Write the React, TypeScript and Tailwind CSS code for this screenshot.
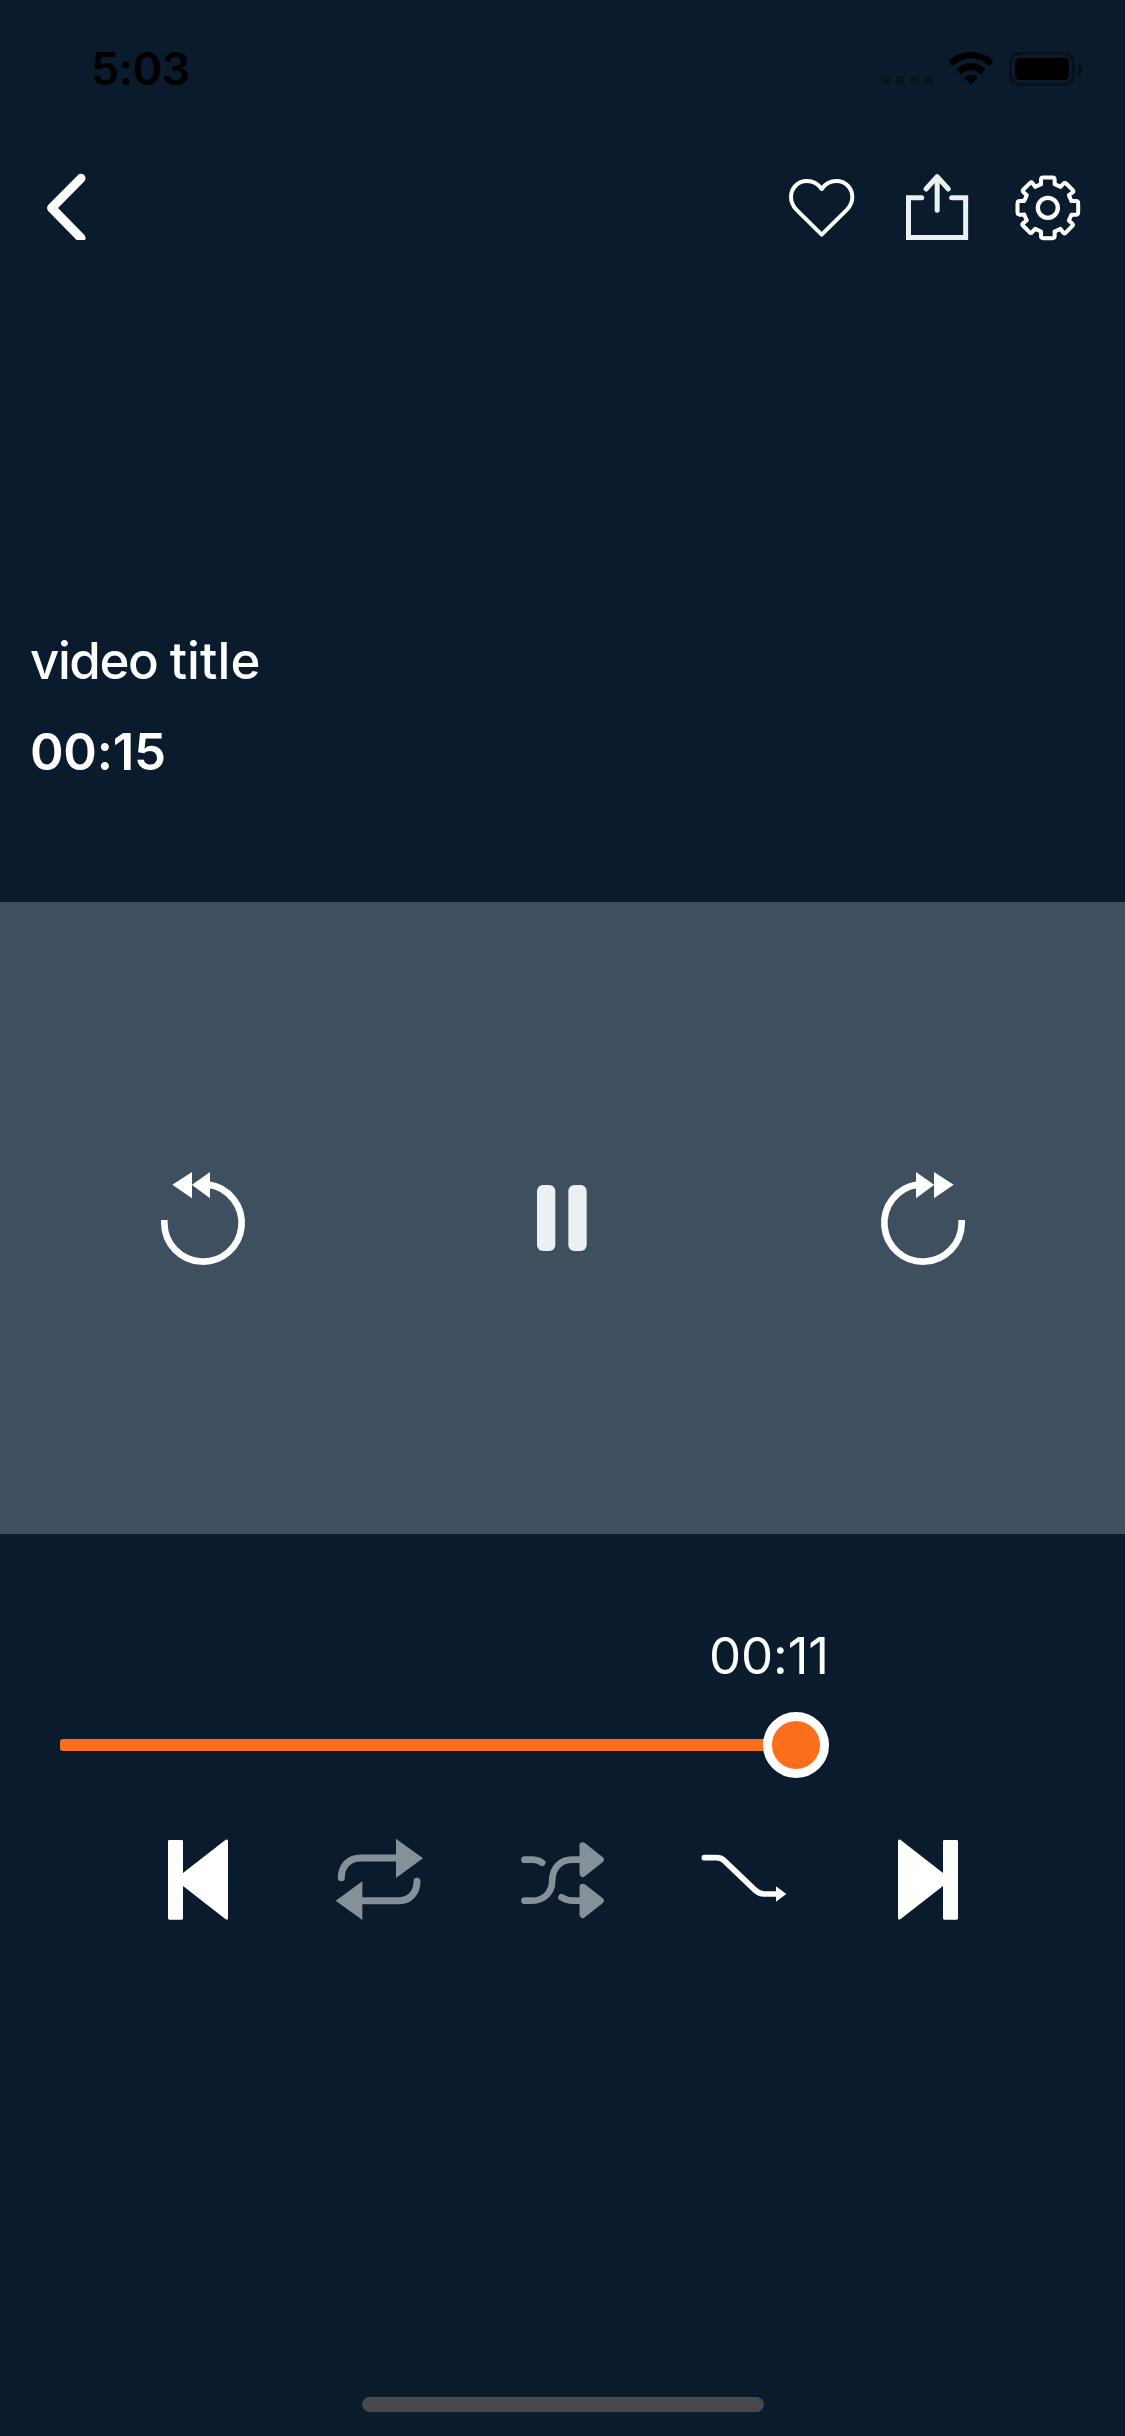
import type { ReactNode } from "react";

type IconProps = { label: string; viewBox: string; className: string; children: ReactNode };

function Icon({ label, viewBox, className, children }: IconProps) {
  return (
    <svg aria-label={label} viewBox={viewBox} className={className} fill="none" strokeLinejoin="round" strokeLinecap="round">
      {children}
    </svg>
  );
}

function StatusBar() {
  return (
    <header className="flex h-[150px] items-start justify-between pt-[39px] pr-[40px] pl-[91px] text-black">
      <span className="text-[45px] leading-[60px] font-semibold tracking-[-0.6px]">5:03</span>
      <Icon label="Status" viewBox="0 0 225 60" className="mt-[1px] h-[60px] w-[225px]">
        <g fill="#081521">
          <rect x="22" y="36" width="9" height="9" rx="3" />
          <rect x="36" y="36" width="9" height="9" rx="3" />
          <rect x="50" y="36" width="9" height="9" rx="3" />
          <rect x="64" y="36" width="9" height="9" rx="3" />
        </g>
        <g fill="#000">
          <path d="M111 12C120 12 128 15.500 133.700 21.200L129.300 26.200C124.500 21.500 118 18.600 111 18.600C104 18.600 97.500 21.500 92.700 26.200L88.300 21.200C94 15.500 102 12 111 12Z" />
          <path d="M111 23C116.800 23 121.800 25.300 125.700 29.400L120.800 34.400C118.300 31.700 114.800 30.200 111 30.200C107.200 30.200 103.700 31.700 101.200 34.400L96.300 29.400C100.200 25.300 105.200 23 111 23Z" />
          <path d="M111 34.500C113.700 34.500 116 35.700 117.600 37.800L111 45L104.400 37.800C106 35.700 108.300 34.500 111 34.500Z" />
          <rect x="155" y="18" width="54" height="22" rx="4.500" />
        </g>
        <rect x="150.500" y="13.500" width="63" height="31" rx="9" stroke="#06111b" strokeWidth="3" />
        <path d="M218 22.500C220.500 23.500 222 26 222 29C222 32 220.500 34.500 218 35.500Z" fill="#06111b" />
      </Icon>
    </header>
  );
}

const GEAR_QUARTER =
  "M-20.500-71V-84Q-20.500-91-14-91H14Q20.500-91 20.500-84V-71L38-63L47-73Q51-78 55-73L75-53Q79-49 74-46L63-38L71-20.500";

function NavBar() {
  return (
    <nav className="flex h-[110px] justify-between pl-[40px]">
      <Icon label="Back" viewBox="0 0 60 90" className="h-[90px] w-[60px]">
        <path d="M41 28.300L11.600 58L41 88" stroke="#fff" strokeWidth="9" />
      </Icon>
      <div className="flex">
        <Icon label="Favourite" viewBox="0 0 330 330" className="size-[110px]">
          <path
            d="M155 117C144 101 128 93 111 93C83 93 63 115 63 141C63 158 69 168 79 179L155 254L231 179C241 168 247 158 247 141C247 115 227 93 199 93C182 93 166 101 155 117Z"
            stroke="#fff"
            strokeWidth="12"
          />
        </Icon>
        <Icon label="Share" viewBox="330 0 330 330" className="size-[110px]">
          <g stroke="#ecf0f3" strokeWidth="15">
            <path d="M455 143H415.500V262.500H587V143H545" strokeLinejoin="miter" />
            <path d="M501.500 82V181M468 117L501.500 80L535 117" />
          </g>
        </Icon>
        <Icon label="Settings" viewBox="660 0 405 330" className="h-[110px] w-[135px]">
          <g transform="translate(833.500 173.500)" stroke="#fff" strokeWidth="12">
            <path d={GEAR_QUARTER} />
            <path d={GEAR_QUARTER} transform="rotate(90)" />
            <path d={GEAR_QUARTER} transform="rotate(180)" />
            <path d={GEAR_QUARTER} transform="rotate(270)" />
            <circle r="30" strokeWidth="13" />
          </g>
        </Icon>
      </div>
    </nav>
  );
}

function SkipGlyph() {
  return (
    <>
      <path d="M103 240V249A116 116 0 1 0 236 134" stroke="#fff" strokeWidth="20" strokeLinecap="butt" />
      <path d="M127 134L186 96V134L240 96V175L186 135V175Z" fill="#fff" />
    </>
  );
}

function VideoPanel() {
  return (
    <section className="flex h-[632px] justify-between bg-[#3e4f60] pt-[238px] pr-[135px] pl-[130px]">
      <Icon label="Rewind" viewBox="0 0 420 420" className="size-[140px]">
        <SkipGlyph />
      </Icon>
      <Icon label="Pause" viewBox="-30 -60 420 420" className="size-[140px]">
        <rect x="111" y="75" width="55" height="198" rx="18" fill="#ecf0f3" />
        <rect x="205" y="75" width="55" height="198" rx="18" fill="#ecf0f3" />
      </Icon>
      <Icon label="Fast forward" viewBox="0 0 420 420" className="size-[140px]">
        <g transform="translate(438 0) scale(-1 1)">
          <SkipGlyph />
        </g>
      </Icon>
    </section>
  );
}

function SeekBar() {
  return (
    <div className="w-[829px] pl-[60px]">
      <div className="flex justify-end text-[51px] leading-[60px] tracking-[-0.1px] text-white">00:11</div>
      <div className="mt-[26px] flex h-[66px] items-center">
        <div className="-mr-[4px] h-[12px] grow rounded-l-[3px] bg-[#fb6f1c]" />
        <div className="size-[66px] rounded-full border-[9px] border-white bg-[#fb6f1c]" />
      </div>
    </div>
  );
}

function PlaybackControls() {
  return (
    <div className="mx-auto mt-[42px] grid w-[912px] grid-cols-5 justify-items-center">
      <Icon label="Previous" viewBox="-6 0 360 360" className="size-[120px]">
        <path d="M88 60H125Q129 60 129 64V159L257 59Q264 56 264 64V294Q264 301 257 298L129 198V295Q129 299 125 299H88Q84 299 84 295V64Q84 60 88 60Z" fill="#fff" />
      </Icon>
      <Icon label="Repeat" viewBox="540 0 360 360" className="size-[120px]">
        <path d="M604 173C604 137 628 114 662 114H772M831 184C831 220 808 242 778 242H664" stroke="#878f98" strokeWidth="21" />
        <path d="M768 56L849 115L768 174ZM667 184L587 242L667 300Z" fill="#878f98" />
      </Icon>
      <Icon label="Shuffle" viewBox="7.500 0 360 360" className="size-[120px]">
        <path d="M75 119H97Q115 119 128 128M75 242H98C134 242 158 216 158 184C158 144 182 119 218 119H244M186 232Q201 242 222 242H244" stroke="#878f98" strokeWidth="20" />
        <path d="M250 77L303 119L250 161ZM250 201L303 242L250 284Z" fill="#878f98" stroke="#878f98" strokeWidth="20" />
      </Icon>
      <Icon label="Play in order" viewBox="555 0 360 360" className="size-[120px]">
        <path d="M613 113H650Q664 113 675 124L766 211Q778 222 794 222H830" stroke="#fff" strokeWidth="17" />
        <path d="M828 199L859 222L828 245Z" fill="#fff" />
      </Icon>
      <Icon label="Next" viewBox="21 0 360 360" className="size-[120px]">
        <path d="M290 60H253Q249 60 249 64V159L121 59Q114 56 114 64V294Q114 301 121 298L249 198V295Q249 299 253 299H290Q294 299 294 295V64Q294 60 290 60Z" fill="#fff" />
      </Icon>
    </div>
  );
}

export default function App() {
  return (
    <main className="flex h-[2436px] w-[1125px] flex-col overflow-hidden bg-[#091b2c] font-['Inter',sans-serif]">
      <StatusBar />
      <NavBar />
      <div className="flex h-[642px] flex-col gap-[31px] pt-[371px] pl-[30px] text-[51px] leading-[60px] text-white">
        <h1 className="font-medium">
          <span className="tracking-[-1.4px]">video </span>
          <span className="tracking-[0.1px]">title</span>
        </h1>
        <p className="font-semibold tracking-[-0.3px]">00:15</p>
      </div>
      <VideoPanel />
      <div className="flex grow flex-col pt-[92px]">
        <SeekBar />
        <PlaybackControls />
        <div className="mx-auto mt-auto mb-[24px] h-[15px] w-[402px] rounded-full bg-[#484848]" />
      </div>
    </main>
  );
}
